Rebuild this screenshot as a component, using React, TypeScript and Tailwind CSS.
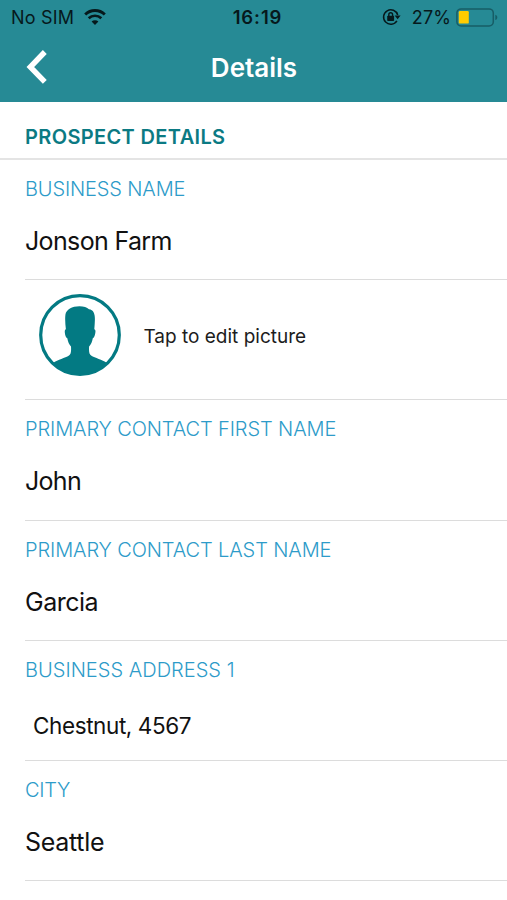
interface Field {
  label: string;
  value: string;
  labelClass: string;
  valueClass: string;
}

const businessName: Field = {
  label: "BUSINESS NAME",
  value: "Jonson Farm",
  labelClass: "tracking-[-0.14px]",
  valueClass: "text-[25px] tracking-[-0.65px]",
};

const fields: Field[] = [
  {
    label: "PRIMARY CONTACT FIRST NAME",
    value: "John",
    labelClass: "tracking-[-0.11px]",
    valueClass: "text-[25px] tracking-[-0.7px]",
  },
  {
    label: "PRIMARY CONTACT LAST NAME",
    value: "Garcia",
    labelClass: "tracking-[-0.11px]",
    valueClass: "text-[25px] tracking-[-0.5px]",
  },
  {
    label: "BUSINESS ADDRESS 1",
    value: "Chestnut, 4567",
    labelClass: "tracking-[0.02px]",
    valueClass: "pl-2 pt-[4px] text-[22.5px] tracking-[-0.4px]",
  },
  {
    label: "CITY",
    value: "Seattle",
    labelClass: "tracking-[-0.3px]",
    valueClass: "text-[25px] tracking-[-0.3px]",
  },
];

function WifiIcon() {
  return (
    <svg width="22" height="17" viewBox="0 0 22 17" fill="none" aria-hidden="true">
      <path d="M1.2 5.5a14 14 0 0 1 19.6 0" stroke="#06191c" strokeWidth="2.9" />
      <path d="M4.7 9.3a9 9 0 0 1 12.6 0" stroke="#06191c" strokeWidth="2.7" />
      <path d="M11 15.9 7.6 12.6a4.8 4.8 0 0 1 6.8 0z" fill="#06191c" />
    </svg>
  );
}

function RotationLockIcon() {
  return (
    <svg width="19" height="18" viewBox="0 0 19 18" fill="none" aria-hidden="true">
      <path d="M14.9 12.8a7.2 7.2 0 1 1 .8-5.8" stroke="#06191c" strokeWidth="1.5" />
      <path d="M12.6 7.4h6l-3 3.9z" fill="#06191c" />
      <rect x="5.2" y="7.8" width="6.9" height="5.2" rx="0.8" fill="#06191c" />
      <path d="M6.8 8.4V6.7a1.9 1.9 0 0 1 3.8 0v1.7" stroke="#06191c" strokeWidth="1.4" />
    </svg>
  );
}

function BatteryIcon() {
  return (
    <svg width="42" height="19" viewBox="0 0 42 19" fill="none" aria-hidden="true">
      <rect x="0.9" y="0.9" width="36.4" height="17" rx="4.2" stroke="#175d66" strokeWidth="1.5" />
      <rect x="2.8" y="3" width="10" height="12.6" rx="1.2" fill="#ffcc00" />
      <path d="M39.3 6.7c2.7.8 2.7 4.6 0 5.4z" fill="#175d66" />
    </svg>
  );
}

function Avatar() {
  return (
    <svg width="82" height="82" viewBox="0 0 82 82" fill="none" aria-hidden="true">
      <circle cx="41" cy="41" r="39.3" stroke="#037a83" strokeWidth="3.2" />
      <path
        d="M14 69C19 65.5 26 64 30 61.5c2-1.5 2.3-4.5 2-9-2-2.2-3-4.7-3.7-8.3-1.5-.6-2.3-3.2-2.5-6-.1-1.7.2-2.6 1.1-2.9-.6-5-1-10-.5-14.500C27.200 15.200 33 12.200 40.500 12.200c4.200 0 7.500 1 9.500 3 4.500.6 6 4.400 5.900 10.400-.1 3.500-.3 6.500-.6 9.700 1 .3 1.300 1.300 1.100 2.900-.3 2.800-1.100 5.400-2.600 6-.7 3.600-1.700 6.100-3.700 8.300-.3 4.500 0 7.500 2 9 4 2.500 11 4 15.900 7.500A39.300 39.300 0 0 1 14 69z"
        fill="#037a83"
      />
    </svg>
  );
}

function FieldRow({ field }: { field: Field }) {
  return (
    <div className="ml-[25px] flex h-[120.2px] flex-col border-b-[1.3px] border-[#dcdcdc] pt-[15px]">
      <p className={`text-xl leading-[28px] font-light text-[#2d9bc9] ${field.labelClass}`}>
        {field.label}
      </p>
      <p className={`mt-[22px] leading-[32px] text-[#111111] ${field.valueClass}`}>{field.value}</p>
    </div>
  );
}

export default function App() {
  return (
    <div className="h-[900px] w-full overflow-hidden bg-white font-['Inter',sans-serif]">
      <header className="h-[102px] bg-[#268a95]">
        <div className="grid h-[34px] grid-cols-3 items-center pr-[9px] pl-[11px] text-[18px] text-[#06191c]">
          <div className="flex items-center gap-[10px]">
            <span className="tracking-[0.2px]">No SIM</span>
            <WifiIcon />
          </div>
          <span className="pt-px pl-[6px] text-center text-[18.5px] font-semibold tracking-[0.9px]">
            16:19
          </span>
          <div className="flex items-center justify-end">
            <RotationLockIcon />
            <span className="mr-[5px] ml-[11px] tracking-[0.1px]">27%</span>
            <BatteryIcon />
          </div>
        </div>
        <div className="grid h-[66px] grid-cols-[60px_1fr_60px] items-center">
          <button className="pl-[26px]" aria-label="Back">
            <svg width="22" height="34" viewBox="0 0 22 34" fill="none">
              <path d="M18.8 2 4.3 17l14.5 14.8" stroke="#ffffff" strokeWidth="5.4" />
            </svg>
          </button>
          <h1 className="pl-[1px] text-center text-[26px] font-semibold text-white">Details</h1>
        </div>
      </header>

      <main>
        <h2 className="flex h-[58px] items-center border-b-2 border-[#e4e4e4] pt-[13px] pl-[25px] text-xl font-semibold tracking-[0.36px] text-[#0b7a83]">
          PROSPECT DETAILS
        </h2>
        <FieldRow field={businessName} />
        <button className="ml-[25px] flex h-[120.2px] w-[482px] items-center border-b-[1.3px] border-[#dcdcdc] pb-[9px] pl-[14px]">
          <Avatar />
          <span className="mt-[3px] ml-[22.5px] text-[19px] text-[#1c1c1c]">Tap to edit picture</span>
        </button>
        {fields.map((field) => (
          <FieldRow key={field.label} field={field} />
        ))}
      </main>
    </div>
  );
}
